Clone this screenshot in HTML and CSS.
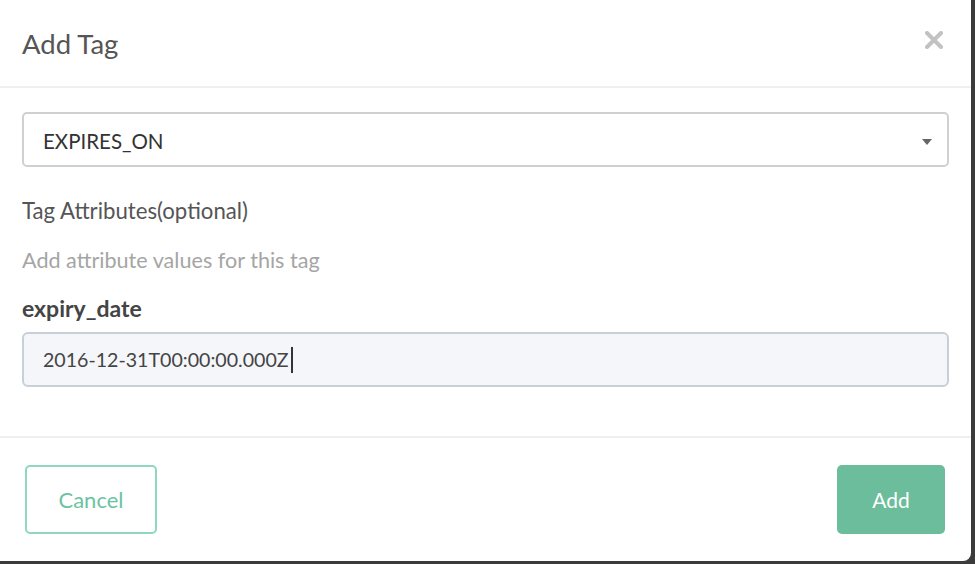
FILE: index.html
```html
<!DOCTYPE html>
<html>
<head>
<meta charset="utf-8">
<link rel="stylesheet" href="styles.css">
</head>
<body>
<div class="dialog">
  <div class="header">
    <h1 class="title">Add Tag</h1>
    <svg class="close" width="18" height="18" viewBox="0 0 18 18"><path d="M2 2L16 16M16 2L2 16" stroke="#c2c2c2" stroke-width="4" stroke-linecap="round"/></svg>
  </div>
  <div class="body">
    <div class="select">
      <span class="select-text">EXPIRES_ON</span>
      <span class="caret"></span>
    </div>
    <div class="label">Tag Attributes(optional)</div>
    <div class="hint">Add attribute values for this tag</div>
    <div class="attr-name">expiry_date</div>
    <div class="input"><span class="input-text">2016-12-31T00:00:00.000Z</span><span class="cursor"></span></div>
  </div>
  <div class="footer">
    <button class="btn btn-cancel">Cancel</button>
    <button class="btn btn-add">Add</button>
  </div>
</div>
</body>
</html>
```

FILE: styles.css
```css
html, body {
  margin: 0;
  padding: 0;
}
body {
  background: #3b3b3b;
  width: 975px;
  height: 564px;
  overflow: hidden;
  font-family: Lato, "Open Sans", sans-serif;
}
.dialog {
  width: 971px;
  height: 561px;
  background: #fff;
  border-bottom-right-radius: 8px;
  display: flex;
  flex-direction: column;
}
.header {
  height: 86px;
  border-bottom: 2px solid #efefef;
  display: flex;
  align-items: center;
  justify-content: space-between;
  padding: 0 28px 0 22px;
}
.title {
  margin: 0;
  font-size: 27.5px;
  font-weight: 400;
  color: #555;
  line-height: 32px;
  padding-top: 2px;
}
.close {
  display: block;
  margin-bottom: 6px;
}
.body {
  box-sizing: border-box;
  height: 350px;
  padding: 24px 22px 0 22px;
  border-bottom: 2px solid #efefef;
}
.select {
  box-sizing: border-box;
  height: 55px;
  border: 2px solid #d0d0d0;
  border-radius: 5px;
  display: flex;
  align-items: center;
  justify-content: space-between;
  padding: 0 15px 0 19px;
}
.select-text {
  font-size: 20.5px;
  color: #333;
  padding-top: 2px;
}
.caret {
  width: 0;
  height: 0;
  border-left: 5px solid transparent;
  border-right: 5px solid transparent;
  border-top: 6px solid #666;
  margin-top: 5px;
}
.label {
  margin-top: 32px;
  line-height: 24px;
  font-size: 22.2px;
  color: #555;
}
.hint {
  margin-top: 25px;
  line-height: 24px;
  font-size: 21.6px;
  color: #a5a5a5;
}
.attr-name {
  margin-top: 24px;
  line-height: 24px;
  font-size: 23px;
  font-weight: 700;
  color: #444;
}
.input {
  box-sizing: border-box;
  margin-top: 12px;
  height: 55px;
  border: 2px solid #c7cfd7;
  border-radius: 6px;
  background: #f5f6fa;
  display: flex;
  align-items: center;
  padding: 0 19px;
}
.input-text {
  font-size: 19.6px;
  color: #444;
}
.cursor {
  width: 2px;
  height: 26px;
  background: #333;
  margin-left: 2px;
}
.footer {
  flex: 1;
  display: flex;
  align-items: center;
  justify-content: space-between;
  padding: 0 26px 0 25px;
}
.btn {
  height: 69px;
  border-radius: 5px;
  font-family: Lato, "Open Sans", sans-serif;
  font-size: 22px;
}
.btn-cancel {
  width: 132px;
  background: #fff;
  border: 2px solid #8fd8be;
  color: #6cc3a2;
}
.btn-add {
  width: 108px;
  background: #6bbd9b;
  border: none;
  color: #fff;
  font-size: 21px;
}
```
